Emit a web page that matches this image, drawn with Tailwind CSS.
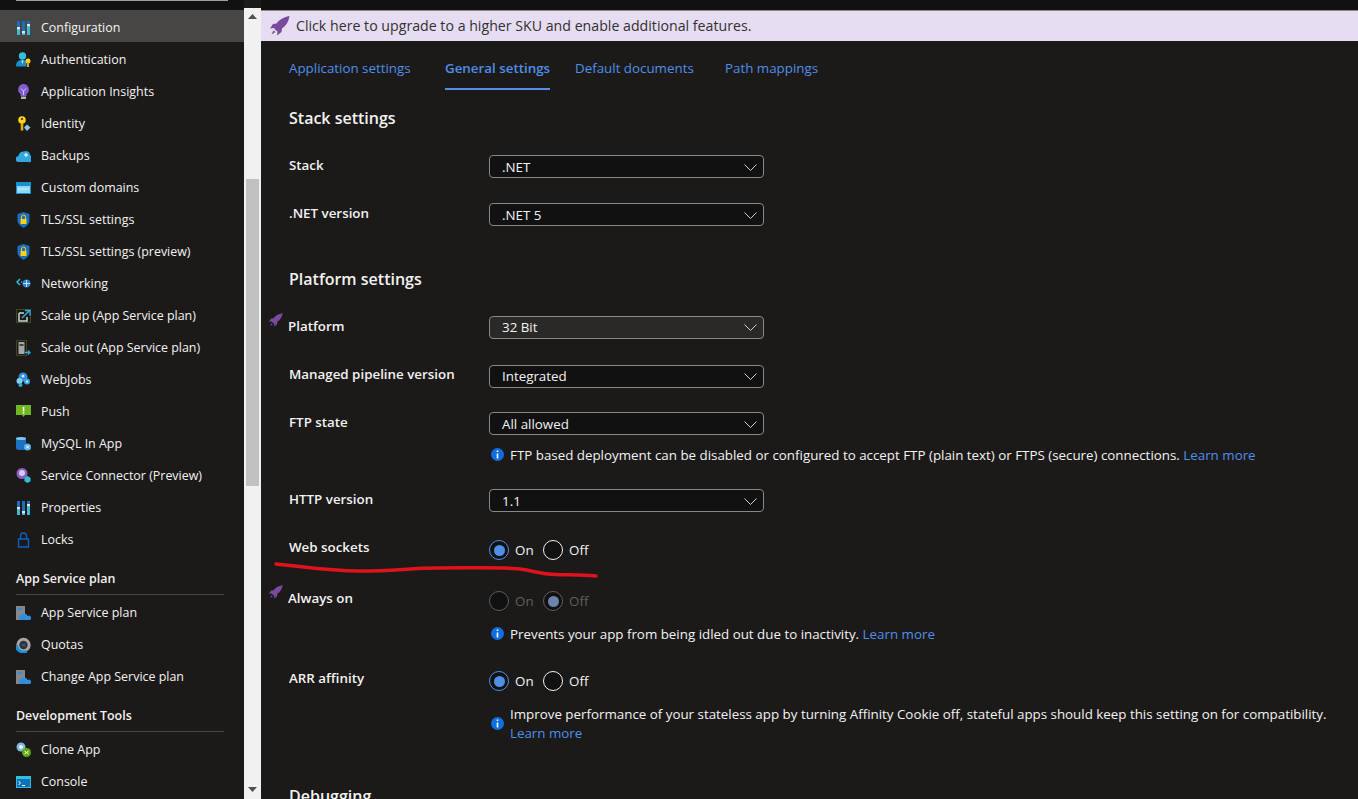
<!DOCTYPE html>
<html lang="en">
<head>
  <meta charset="UTF-8">
  <title>Configuration - General settings</title>
  <script src="https://cdn.jsdelivr.net/npm/@tailwindcss/browser@4"></script>
</head>
<body class="bg-[#1b1a19] font-['Open_Sans',sans-serif] text-[#f3f2f1] overflow-hidden">
<div class="relative flex h-[799px] w-[1358px] overflow-hidden">

  <!-- Resource menu -->
  <nav class="w-[244px] shrink-0 bg-[#1b1a19] text-[12.45px]">
    <div class="h-[10px] bg-[#111]"><div class="mx-4 h-px bg-[#a19f9d]"></div></div>

    <a class="flex h-8 items-center gap-[10px] bg-[#484644] pl-4 pt-1">
      <svg class="h-4 w-[15px] shrink-0" viewBox="0 0 15 16"><path d="M1 1h3v6H1zM6 1h3v10H6zM11 1h3v3h-3z" fill="#1a6fc0"/><path d="M1 9.500h3V15H1zM6 13.500h3V15H6zM11 6.500h3V15h-3z" fill="#32bedd"/><path d="M1 7h3v2.500H1zM6 11h3v2.500H6zM11 4h3v2.500h-3z" fill="#e6e6e6"/></svg>
      <span>Configuration</span>
    </a>
    <a class="flex h-8 items-center gap-[10px] pl-4 pt-1">
      <svg class="h-4 w-[15px] shrink-0" viewBox="0 0 15 16"><circle cx="6.500" cy="4" r="3.700" fill="#32bedd"/><path d="M0 14.500c0-4.500 2-6.500 6.500-6.500 2 0 3 .5 4 1.500v5z" fill="#1a8fd0"/><path d="M5.500 8.500h2L6.500 12z" fill="#cfeafa"/><circle cx="12" cy="9" r="2.500" fill="#fcd116"/><path d="M11 10h2v5h-2z" fill="#e8a80c"/></svg>
      <span>Authentication</span>
    </a>
    <a class="flex h-8 items-center gap-[10px] pl-4 pt-1">
      <svg class="h-4 w-[15px] shrink-0" viewBox="0 0 15 16"><path d="M7.500 0a5.500 5.500 0 0 0-3 10v2h6v-2a5.500 5.500 0 0 0-3-10z" fill="#7f5fd0"/><path d="M5 12.500h5V15H5z" fill="#b3b3b3"/><path d="M5 4.500l2.500 2.500L10 4.500M7.500 7v4" stroke="#d9c8f5" fill="none"/></svg>
      <span>Application Insights</span>
    </a>
    <a class="flex h-8 items-center gap-[10px] pl-4 pt-1">
      <svg class="h-4 w-[15px] shrink-0" viewBox="0 0 15 16"><circle cx="6" cy="4" r="3.800" fill="#fcd116"/><path d="M4.700 7h2.600v7.500H4.700z" fill="#e8a80c"/><circle cx="6" cy="3" r="1" fill="#1b1a19"/><path d="M11 8.500l3.500 3-3.500 3.500-3-3.500z" fill="#7fc8e8"/></svg>
      <span>Identity</span>
    </a>
    <a class="flex h-8 items-center gap-[10px] pl-4 pt-1">
      <svg class="h-4 w-[15px] shrink-0" viewBox="0 0 15 16"><path d="M3 14a3 3 0 0 1-.500-6A5 5 0 0 1 8 3.500a4 4 0 0 1 6 3.500 3.500 3.500 0 0 1-2 7z" fill="#32a8e0"/><path d="M8 7h4M10 5v4" stroke="#fff"/></svg>
      <span>Backups</span>
    </a>
    <a class="flex h-8 items-center gap-[10px] pl-4 pt-1">
      <svg class="h-4 w-[15px] shrink-0" viewBox="0 0 15 16"><path d="M0 2h15v12H0z" fill="#1a8fd0"/><path d="M1 6h13v7H1z" fill="#8fd8f5"/><path d="M2.500 9h10" stroke="#fff" stroke-dasharray="2 1"/></svg>
      <span>Custom domains</span>
    </a>
    <a class="flex h-8 items-center gap-[10px] pl-4 pt-1">
      <svg class="h-4 w-[15px] shrink-0" viewBox="0 0 15 16"><path d="M7.500 0l6 2v6c0 4-3 6-6 8-3-2-6-4-6-8V2z" fill="#1b6ec2"/><path d="M4.500 7h6v5h-6z" fill="#fcd116"/><path d="M5.500 7V5a2 2 0 0 1 4 0v2" stroke="#fcd116" fill="none"/></svg>
      <span>TLS/SSL settings</span>
    </a>
    <a class="flex h-8 items-center gap-[10px] pl-4 pt-1">
      <svg class="h-4 w-[15px] shrink-0" viewBox="0 0 15 16"><path d="M7.500 0l6 2v6c0 4-3 6-6 8-3-2-6-4-6-8V2z" fill="#1b6ec2"/><path d="M4.500 7h6v5h-6z" fill="#fcd116"/><path d="M5.500 7V5a2 2 0 0 1 4 0v2" stroke="#fcd116" fill="none"/></svg>
      <span>TLS/SSL settings (preview)</span>
    </a>
    <a class="flex h-8 items-center gap-[10px] pl-4 pt-1">
      <svg class="h-4 w-[15px] shrink-0" viewBox="0 0 15 16"><path d="M4 3L1 6l3 3" stroke="#32bedd" stroke-width="1.500" fill="none"/><path d="M5 6h3" stroke="#9fd8f0" stroke-dasharray="1 1"/><circle cx="10.500" cy="7.500" r="4" fill="#2f7fd0"/><path d="M7 7.500h7M10.500 4v7" stroke="#bfe3f7"/></svg>
      <span>Networking</span>
    </a>
    <a class="flex h-8 items-center gap-[10px] pl-4 pt-1">
      <svg class="h-4 w-[15px] shrink-0" viewBox="0 0 15 16"><path d="M.5 1.500h14v13H.5z" fill="none" stroke="#5c7a2e" stroke-dasharray="1 1"/><path d="M3 5h5M3 5v8h8V9" stroke="#d0d0d0" stroke-width="1.500" fill="none"/><path d="M6 10l7-7M9 2.500h5v5" stroke="#32a8e0" stroke-width="1.500" fill="none"/></svg>
      <span>Scale up (App Service plan)</span>
    </a>
    <a class="flex h-8 items-center gap-[10px] pl-4 pt-1">
      <svg class="h-4 w-[15px] shrink-0" viewBox="0 0 15 16"><path d="M.5.500h10v15H.5z" fill="none" stroke="#5c7a2e" stroke-dasharray="1 1"/><path d="M2.500 2h6v12h-6z" fill="#a6a6a6"/><path d="M3.500 4h4v2h-4z" fill="#444"/><path d="M9 12.500h5M12 10.500l2 2-2 2" stroke="#32a8e0" stroke-width="1.300" fill="none"/></svg>
      <span>Scale out (App Service plan)</span>
    </a>
    <a class="flex h-8 items-center gap-[10px] pl-4 pt-1">
      <svg class="h-4 w-[15px] shrink-0" viewBox="0 0 15 16"><circle cx="7" cy="5" r="4.500" fill="#2f8fdc"/><circle cx="3.500" cy="9" r="3" fill="#7fd0f0"/><circle cx="11" cy="9.500" r="3" fill="#32a8e0"/><circle cx="4.500" cy="13" r="2" fill="#32a8e0"/><circle cx="11" cy="9.500" r="1" fill="#fff"/><circle cx="7" cy="4" r="1.500" fill="#cfeafa"/></svg>
      <span>WebJobs</span>
    </a>
    <a class="flex h-8 items-center gap-[10px] pl-4 pt-1">
      <svg class="h-4 w-[15px] shrink-0" viewBox="0 0 15 16"><path d="M0 1h15v10H9l-1.500 2L6 11H0z" fill="#6fb822"/><path d="M6.800 3h1.500v4.500H6.800zM6.800 8.300h1.500v1.500H6.800z" fill="#fff"/></svg>
      <span>Push</span>
    </a>
    <a class="flex h-8 items-center gap-[10px] pl-4 pt-1">
      <svg class="h-4 w-[15px] shrink-0" viewBox="0 0 15 16"><path d="M0 2.500C0 .500 10 .500 10 2.500v10c0 2-10 2-10 0z" fill="#1a6fc0"/><ellipse cx="5" cy="2.500" rx="5" ry="1.500" fill="#7fc8e8"/><circle cx="11.500" cy="11" r="3.500" fill="#5ab0e8"/><path d="M10 9.500l3 3M13 9.500l-3 3" stroke="#fff"/></svg>
      <span>MySQL In App</span>
    </a>
    <a class="flex h-8 items-center gap-[10px] pl-4 pt-1">
      <svg class="h-4 w-[15px] shrink-0" viewBox="0 0 15 16"><circle cx="6" cy="5.500" r="5.500" fill="#8661c5"/><circle cx="6" cy="5" r="3" fill="#d9c8f5"/><path d="M11.500 8l3 1.700v3.600l-3 1.700-3-1.700V9.700z" fill="#32bedd"/></svg>
      <span>Service Connector (Preview)</span>
    </a>
    <a class="flex h-8 items-center gap-[10px] pl-4 pt-1">
      <svg class="h-4 w-[15px] shrink-0" viewBox="0 0 15 16"><path d="M1 1h3v6H1zM6 1h3v10H6zM11 1h3v3h-3z" fill="#1a6fc0"/><path d="M1 9.500h3V15H1zM6 13.500h3V15H6zM11 6.500h3V15h-3z" fill="#32bedd"/><path d="M1 7h3v2.500H1zM6 11h3v2.500H6zM11 4h3v2.500h-3z" fill="#e6e6e6"/></svg>
      <span>Properties</span>
    </a>
    <a class="flex h-8 items-center gap-[10px] pl-4 pt-1">
      <svg class="h-4 w-[15px] shrink-0" viewBox="0 0 15 16"><path d="M2.500 7h10v8h-10z" fill="none" stroke="#0f5fc2" stroke-width="1.400"/><path d="M4.500 7V4a3 3 0 0 1 6 0v3" fill="none" stroke="#0f5fc2" stroke-width="1.400"/></svg>
      <span>Locks</span>
    </a>

    <div class="mx-4 flex h-[41px] w-[208px] items-end border-b border-[#484644] pb-[5px] font-semibold">App Service plan</div>
    <a class="flex h-8 items-center gap-[10px] pl-4 pt-1">
      <svg class="h-4 w-[15px] shrink-0" viewBox="0 0 15 16"><path d="M0 1h9v14H0z" fill="#8a8886"/><path d="M1.500 3h5v2h-5z" fill="#2f8fdc"/><path d="M5 15a2.500 2.500 0 0 1 .300-5 3.500 3.500 0 0 1 6.200 1 2.200 2.200 0 0 1 2.500 4z" fill="#2f8fdc"/></svg>
      <span>App Service plan</span>
    </a>
    <a class="flex h-8 items-center gap-[10px] pl-4 pt-1">
      <svg class="h-4 w-[15px] shrink-0" viewBox="0 0 15 16"><circle cx="7.500" cy="8" r="5.700" fill="#333" stroke="#a6a6a6" stroke-width="3"/><path d="M.3 8a7.200 7.200 0 0 0 10.400 6.400" fill="none" stroke="#1a8fe0" stroke-width="3"/><path d="M6 6.500l3 3M9 6.500l-3 3" stroke="#1a6fc0"/></svg>
      <span>Quotas</span>
    </a>
    <a class="flex h-8 items-center gap-[10px] pl-4 pt-1">
      <svg class="h-4 w-[15px] shrink-0" viewBox="0 0 15 16"><path d="M0 1h9v14H0z" fill="#8a8886"/><path d="M1.500 3h5v2h-5z" fill="#2f8fdc"/><path d="M5 15a2.500 2.500 0 0 1 .300-5 3.500 3.500 0 0 1 6.200 1 2.200 2.200 0 0 1 2.500 4z" fill="#2f8fdc"/></svg>
      <span>Change App Service plan</span>
    </a>

    <div class="mx-4 flex h-[41px] w-[208px] items-end border-b border-[#484644] pb-[5px] font-semibold">Development Tools</div>
    <a class="flex h-8 items-center gap-[10px] pl-4 pt-1">
      <svg class="h-4 w-[15px] shrink-0" viewBox="0 0 15 16"><circle cx="5" cy="5" r="4.500" fill="#7fb8d8"/><circle cx="5" cy="5" r="2" fill="#e6f3fa"/><circle cx="10.500" cy="10.500" r="4.500" fill="#5ea90f"/><path d="M8.500 9l4 3M12.500 9l-4 3" stroke="#fff"/></svg>
      <span>Clone App</span>
    </a>
    <a class="flex h-8 items-center gap-[10px] pl-4 pt-1">
      <svg class="h-4 w-[15px] shrink-0" viewBox="0 0 15 16"><path d="M0 2h15v12H0z" fill="#32bedd"/><path d="M1 5h13v8H1z" fill="#0f6fb8"/><path d="M2.500 7l2 2-2 2M6 11.500h3" stroke="#fff" fill="none"/></svg>
      <span>Console</span>
    </a>
  </nav>

  <!-- Menu scrollbar -->
  <div class="mt-2 flex w-[17px] shrink-0 flex-col items-center bg-[#f1f1f1]">
    <svg class="mt-[6px] h-[5px] w-[9px]" viewBox="0 0 9 5"><path d="M4.500 0L9 5H0z" fill="#505050"/></svg>
    <div class="mt-[160px] h-[307px] w-[13px] bg-[#c1c1c1]"></div>
    <svg class="mt-[301px] h-[5px] w-[9px]" viewBox="0 0 9 5"><path d="M0 0h9L4.500 5z" fill="#505050"/></svg>
  </div>

  <!-- Blade content -->
  <main class="min-w-0 flex-1 text-[13.35px]">
    <div class="h-[10px] bg-[#111]"></div>
    <a class="flex h-[31px] items-center gap-[6px] border-t border-[#8a8886] bg-[#e6ddf2] pl-[9px] text-[14.18px] text-[#323130]">
      <svg class="h-5 w-5 shrink-0" viewBox="0 0 20 20"><path d="M19.500 0C13 1.500 9 4 6.500 7.500L3 8 0 12.500 4 12l1.500 2 2 1.500-.500 4 4.500-3.500.500-3.500C16 10 18.500 6 19.500 0z" fill="#7a4a9e"/><path d="M3.500 14.500l-2 4 4-2.500z" fill="#7a4a9e"/></svg>
      <span>Click here to upgrade to a higher SKU and enable additional features.</span>
    </a>

    <div class="px-7">
      <div class="flex h-[49px] whitespace-nowrap text-[#4f8fe8]">
        <a class="flex w-[156px] items-center pt-[6px]">Application settings</a>
        <a class="flex w-[105px] items-center border-b-2 border-[#4f8fe8] pt-[7px] font-semibold">General settings</a>
        <a class="ml-[25px] flex w-[150px] items-center pt-[6px]">Default documents</a>
        <a class="flex items-center pt-[6px]">Path mappings</a>
      </div>

      <h2 class="h-[65px] pt-[17px] text-[16px] font-semibold leading-[22px]">Stack settings</h2>
      <div class="flex h-12">
        <label class="w-[200px] font-semibold">Stack</label>
        <div class="flex h-[23px] w-[275px] items-center justify-between rounded-sm border border-[#8a8886] bg-[#111] pl-3 pr-[6px] pt-px">.NET<svg class="h-[7px] w-[13px]" viewBox="0 0 13 7"><path d="M.5.500l6 6 6-6" fill="none" stroke="#d0d0d0"/></svg></div>
      </div>
      <div class="flex h-12">
        <label class="w-[200px] font-semibold">.NET version</label>
        <div class="flex h-[23px] w-[275px] items-center justify-between rounded-sm border border-[#8a8886] bg-[#111] pl-3 pr-[6px] pt-px">.NET 5<svg class="h-[7px] w-[13px]" viewBox="0 0 13 7"><path d="M.5.500l6 6 6-6" fill="none" stroke="#d0d0d0"/></svg></div>
      </div>

      <h2 class="h-[65px] pt-[17px] text-[16px] font-semibold leading-[22px]">Platform settings</h2>
      <div class="relative flex h-[49px]">
        <svg class="absolute left-[-20px] top-[-3px] h-[14px] w-[14px]" viewBox="0 0 20 20"><path d="M19.500 0C13 1.500 9 4 6.500 7.500L3 8 0 12.500 4 12l1.500 2 2 1.500-.500 4 4.500-3.500.500-3.500C16 10 18.500 6 19.500 0z" fill="#7a4a9e"/><path d="M3.500 14.500l-2 4 4-2.500z" fill="#7a4a9e"/></svg>
        <label class="-ml-px w-[201px] font-semibold">Platform</label>
        <div class="flex h-[23px] w-[275px] items-center justify-between rounded-sm border border-[#8a8886] bg-[#2a2928] pl-3 pr-[6px]">32 Bit<svg class="h-[7px] w-[13px]" viewBox="0 0 13 7"><path d="M.5.500l6 6 6-6" fill="none" stroke="#d0d0d0"/></svg></div>
      </div>
      <div class="flex h-[47px]">
        <label class="-mt-px w-[200px] font-semibold">Managed pipeline version</label>
        <div class="flex h-[23px] w-[275px] items-center justify-between rounded-sm border border-[#8a8886] bg-[#111] pl-3 pr-[6px]">Integrated<svg class="h-[7px] w-[13px]" viewBox="0 0 13 7"><path d="M.5.500l6 6 6-6" fill="none" stroke="#d0d0d0"/></svg></div>
      </div>
      <div class="flex h-[77px]">
        <label class="w-[200px] font-semibold">FTP state</label>
        <div>
          <div class="flex h-[23px] w-[275px] items-center justify-between rounded-sm border border-[#8a8886] bg-[#111] pl-3 pr-[6px] pt-px">All allowed<svg class="h-[7px] w-[13px]" viewBox="0 0 13 7"><path d="M.5.500l6 6 6-6" fill="none" stroke="#d0d0d0"/></svg></div>
          <p class="mt-[10px] flex items-start gap-[6px] pl-[2px] leading-[20px]">
            <svg class="mt-[3px] h-[13px] w-[13px] shrink-0" viewBox="0 0 13 13"><circle cx="6.500" cy="6.500" r="6.500" fill="#0f6fe0"/><path d="M5.700 5.500h1.600v5H5.700zM5.700 2.500h1.600v1.600H5.700z" fill="#fff"/></svg>
            <span>FTP based deployment can be disabled or configured to accept FTP (plain text) or FTPS (secure) connections. <a class="text-[#4f8fe8]">Learn more</a></span>
          </p>
        </div>
      </div>
      <div class="flex h-[51px]">
        <label class="w-[200px] font-semibold">HTTP version</label>
        <div class="flex h-[23px] w-[275px] items-center justify-between rounded-sm border border-[#8a8886] bg-[#111] pl-3 pr-[6px] pt-px">1.1<svg class="h-[7px] w-[13px]" viewBox="0 0 13 7"><path d="M.5.500l6 6 6-6" fill="none" stroke="#d0d0d0"/></svg></div>
      </div>

      <div class="flex h-[51px]">
        <label class="-mt-[3px] w-[200px] font-semibold">Web sockets</label>
        <div class="flex h-5 items-center">
          <span class="flex h-5 w-5 items-center justify-center rounded-full border border-[#4f8fe8] bg-[#111]"><span class="h-[11px] w-[11px] rounded-full bg-[#4f8fe8]"></span></span>
          <span class="ml-[6px] w-[28px]">On</span>
          <span class="h-5 w-5 rounded-full border border-[#f3f2f1] bg-[#111]"></span>
          <span class="ml-[6px]">Off</span>
        </div>
      </div>
      <div class="relative flex h-[80px]">
        <svg class="absolute left-[-20px] top-[-6px] h-[14px] w-[14px]" viewBox="0 0 20 20"><path d="M19.500 0C13 1.500 9 4 6.500 7.500L3 8 0 12.500 4 12l1.500 2 2 1.500-.500 4 4.500-3.500.500-3.500C16 10 18.500 6 19.500 0z" fill="#7a4a9e"/><path d="M3.500 14.500l-2 4 4-2.500z" fill="#7a4a9e"/></svg>
        <label class="-ml-px -mt-[3px] w-[201px] font-semibold">Always on</label>
        <div>
          <div class="flex h-5 items-center text-[#605e5c]">
            <span class="h-5 w-5 rounded-full border border-[#605e5c] bg-[#111]"></span>
            <span class="ml-[6px] w-[28px]">On</span>
            <span class="flex h-5 w-5 items-center justify-center rounded-full border border-[#605e5c] bg-[#111]"><span class="h-[11px] w-[11px] rounded-full bg-[#6a84ad]"></span></span>
            <span class="ml-[6px]">Off</span>
          </div>
          <p class="mt-[13px] flex items-start gap-[6px] pl-[2px] leading-[20px]">
            <svg class="mt-[3px] h-[13px] w-[13px] shrink-0" viewBox="0 0 13 13"><circle cx="6.500" cy="6.500" r="6.500" fill="#0f6fe0"/><path d="M5.700 5.500h1.600v5H5.700zM5.700 2.500h1.600v1.600H5.700z" fill="#fff"/></svg>
            <span>Prevents your app from being idled out due to inactivity. <a class="text-[#4f8fe8]">Learn more</a></span>
          </p>
        </div>
      </div>
      <div class="flex h-[102px]">
        <label class="-mt-[3px] w-[200px] font-semibold">ARR affinity</label>
        <div>
          <div class="flex h-5 items-center">
            <span class="flex h-5 w-5 items-center justify-center rounded-full border border-[#4f8fe8] bg-[#111]"><span class="h-[11px] w-[11px] rounded-full bg-[#4f8fe8]"></span></span>
            <span class="ml-[6px] w-[28px]">On</span>
            <span class="h-5 w-5 rounded-full border border-[#f3f2f1] bg-[#111]"></span>
            <span class="ml-[6px]">Off</span>
          </div>
          <p class="mt-[14px] flex items-start gap-[6px] pl-[2px] leading-[19px]">
            <svg class="mt-[12px] h-[13px] w-[13px] shrink-0" viewBox="0 0 13 13"><circle cx="6.500" cy="6.500" r="6.500" fill="#0f6fe0"/><path d="M5.700 5.500h1.600v5H5.700zM5.700 2.500h1.600v1.600H5.700z" fill="#fff"/></svg>
            <span>Improve performance of your stateless app by turning Affinity Cookie off, stateful apps should keep this setting on for compatibility.<a class="block text-[#4f8fe8]">Learn more</a></span>
          </p>
        </div>
      </div>
      <h2 class="pt-3 text-[16px] font-semibold leading-[22px]">Debugging</h2>
    </div>
  </main>

  <!-- Red pen annotation drawn over the screenshot -->
  <svg class="absolute left-[270px] top-[558px] h-[24px] w-[335px]" viewBox="0 0 335 24"><path d="M6 6C30 8 55 13 90 13S140 10 170 10s65-1 80 1 20 5 35 5.500 28 .5 41 1.500" fill="none" stroke="#e0121c" stroke-width="3.500" stroke-linecap="round"/></svg>
</div>
</body>
</html>
